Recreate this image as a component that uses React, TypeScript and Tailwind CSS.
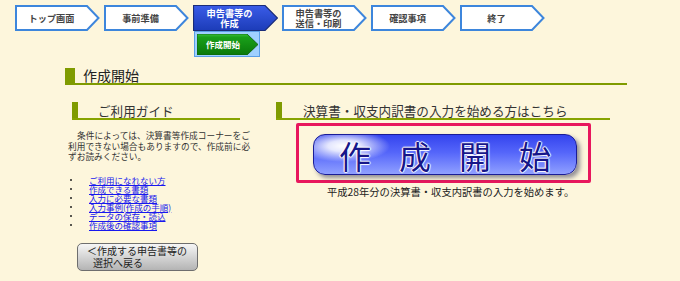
import React from 'react';

type StepProps = {
    lines: string[];
    active?: boolean;
};

// one pentagon step of the progress bar
const Step: React.FC<StepProps> = ({ lines, active }) => {
    return (
        <div className="relative w-[85px] h-[26px]">
            <svg className="absolute inset-0" width="85" height="26" viewBox="0 0 85 26">
                <defs>
                    <linearGradient id="act" x1="0" y1="0" x2="0" y2="1">
                        <stop offset="0" stopColor="#3a5ce8" />
                        <stop offset="1" stopColor="#1c3cb8" />
                    </linearGradient>
                </defs>
                {active ? (
                    <polygon points="0.5,0.5 72,0.5 84.5,13 72,25.5 0.5,25.5" fill="url(#act)" stroke="#1a2c78" strokeWidth="1.2" />
                ) : (
                    <polygon points="1,1 72,1 83.5,13 72,25 1,25" fill="#ffffff" stroke="#3d86dc" strokeWidth="2" />
                )}
            </svg>
            <div
                className={
                    'absolute left-0 top-0 w-[73px] h-[26px] flex flex-col items-center justify-center text-[9.2px] leading-[10px] font-bold ' +
                    (active ? 'text-white' : 'text-[#444]')
                }
            >
                {lines.map((l) => (
                    <span key={l}>{l}</span>
                ))}
            </div>
        </div>
    );
};

const SubStep: React.FC = () => (
    <div className="relative ml-[1px] w-[66px] h-[26px] bg-[#9fd0ff] border border-[#5a9ee6]">
        <svg className="absolute left-[2px] top-[2px]" width="62" height="21" viewBox="0 0 62 21">
            <defs>
                <linearGradient id="grn" x1="0" y1="0" x2="0" y2="1">
                    <stop offset="0" stopColor="#3cc23c" />
                    <stop offset="0.15" stopColor="#1aa01a" />
                    <stop offset="1" stopColor="#0a780a" />
                </linearGradient>
            </defs>
            <polygon points="0,0 50,0 61,10.5 50,21 0,21" fill="url(#grn)" stroke="#0a5a0a" strokeWidth="0.8" />
        </svg>
        <span className="absolute left-[2px] top-[2px] w-[52px] h-[21px] flex items-center justify-center text-[8.5px] font-bold text-white">
            作成開始
        </span>
    </div>
);

const links = [
    'ご利用になれない方',
    '作成できる書類',
    '入力に必要な書類',
    '入力事例(作成の手順)',
    'データの保存・読込',
    '作成後の確認事項',
];

const SubHeading: React.FC<{ title: string; indent: string }> = ({ title, indent }) => (
    <div className="flex items-end h-[18px] border-b-2 border-[#87a300]">
        <div className="w-[6px] h-[16px] bg-[#7f9b00]" />
        <span className={'text-[12.6px] leading-[15px] text-[#333] ' + indent}>{title}</span>
    </div>
);

const App: React.FC = () => {
    return (
        <div className="w-[680px] h-[281px] overflow-hidden bg-[#fdf6dc] font-['Noto_Sans_CJK_JP',sans-serif] text-[#333]">
            {/* progress steps */}
            <div className="flex items-start gap-[4px] pl-[15px] pt-[5px]">
                <Step lines={['トップ画面']} />
                <Step lines={['事前準備']} />
                <div className="flex flex-col">
                    <Step lines={['申告書等の', '作成']} active />
                    <SubStep />
                </div>
                <Step lines={['申告書等の', '送信・印刷']} />
                <Step lines={['確認事項']} />
                <Step lines={['終了']} />
            </div>

            {/* page heading */}
            <div className="ml-[65px] mt-[11px] w-[562px] flex items-end border-b-2 border-[#7f9b00]">
                <div className="w-[10px] h-[15px] bg-[#7f9b00]" />
                <span className="ml-[8px] text-[14px] leading-[15px] text-[#222]">作成開始</span>
            </div>

            <div className="flex mt-[17px]">
                {/* guide column */}
                <div className="ml-[72px] w-[168px]">
                    <SubHeading title="ご利用ガイド" indent="ml-[20px]" />
                    <p className="-ml-[4px] mt-[11px] whitespace-nowrap text-[8.7px] leading-[10.5px] text-[#333]">
                        <span className="inline-block w-[9px]" />条件によっては、決算書等作成コーナーをご
                        <br />
                        利用できない場合もありますので、作成前に必
                        <br />
                        ずお読みください。
                    </p>
                    <ul className="mt-[13px] -ml-[2px]">
                        {links.map((l) => (
                            <li key={l} className="flex items-center h-[9px]">
                                <span className="w-[19px] flex">
                                    <span className="w-[2px] h-[2px] bg-[#222] rounded-full" />
                                </span>
                                <a href="#" className="text-[8.5px] leading-[9px] text-[#1818ee] underline">
                                    {l}
                                </a>
                            </li>
                        ))}
                    </ul>
                    <button className="ml-[5px] mt-[13px] w-[121px] h-[28px] rounded-[5px] border border-[#6e6e6e] bg-[linear-gradient(#f6f6f6,#d8d8d8_45%,#b4b4b4)] text-left text-[10px] leading-[11.5px] text-[#222] pl-[9px]">
                        <span className="block">＜作成する申告書等の</span>
                        <span className="block pl-[6px]">選択へ戻る</span>
                    </button>
                </div>

                {/* start column */}
                <div className="ml-[36px] w-[334px]">
                    <SubHeading title="決算書・収支内訳書の入力を始める方はこちら" indent="ml-[21px]" />
                    <div className="ml-[20px] mt-[3px] w-[295px] h-[60px] border-[3px] border-[#e8175d] rounded-[2px] pl-[14px] pt-[8px]">
                        <button className="w-[264px] h-[41px] rounded-[12px] border-[1.5px] border-[#1a1c96] shadow-[3px_3px_4px_rgba(60,60,90,0.55)] bg-[radial-gradient(46px_16px_at_30px_11px,#ffffff,rgba(255,255,255,0.85)_35%,rgba(255,255,255,0)_100%),linear-gradient(#3444ee,#5566fa_45%,#90a0ff)] flex items-center justify-center gap-[28px] text-[32px] leading-[36px] font-normal text-[#16168a] [text-shadow:0_0_1px_#fff,1px_0_1px_#fff,-1px_0_1px_#fff,0_1px_1px_#fff,0_-1px_1px_#fff]">
                            <span>作</span>
                            <span>成</span>
                            <span>開</span>
                            <span>始</span>
                        </button>
                    </div>
                    <p className="pl-[51px] mt-[2px] text-[10.3px] leading-[13px] text-[#222] whitespace-nowrap">
                        平成28年分の決算書・収支内訳書の入力を始めます。
                    </p>
                </div>
            </div>
        </div>
    );
};

export default App;
